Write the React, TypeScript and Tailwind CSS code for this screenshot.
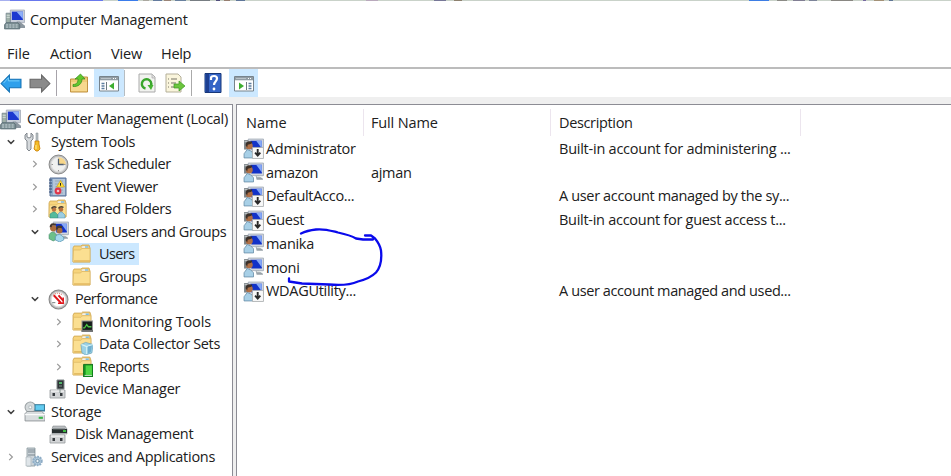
import React from "react";

type IconProps = { children: React.ReactNode; className?: string };

const Svg = ({ children, className = "h-5 w-5" }: IconProps) => (
  <svg viewBox="0 0 20 20" className={`block shrink-0 ${className}`} fill="none">
    {children}
  </svg>
);

const ComputerIcon = () => (
  <Svg className="h-[21px] w-[21px]">
    <path d="M6 1h13.5v12H6z" fill="#c9cfda" stroke="#a4acb9" strokeWidth=".8" />
    <path d="M7.5 2.5h10.5v8H7.5z" fill="#1c38d0" />
    <path d="M12 2.5h6v7z" fill="#8fb0f7" />
    <path d="M2 4h4v9H2z" fill="#9fb0a8" stroke="#6e7f8b" strokeWidth=".7" />
    <path d="M2.5 6h3m-3 2h3" stroke="#dfe8e6" strokeWidth=".7" />
    <path d="M12 12h3l5 4v2h-6z" fill="#8c97a0" />
    <path d="M2 13h11l2 2v4H.5v-4z" fill="#7b8f93" stroke="#566b72" strokeWidth=".7" />
    <path d="M2 15.2h2m1 0h2m1 0h2m1 0h2M2 17.2h2m1 0h2m1 0h2m1 0h2" stroke="#d5e0e5" strokeWidth=".9" />
  </Svg>
);

const ToolsIcon = () => (
  <Svg>
    <path d="M3 1v4l2 1 2-1V1l2 2v4L7 9v8l-2 2-2-2V9L1 7V3z" fill="#d5d9dc" stroke="#777e84" strokeWidth=".9" />
    <path d="M12 1h2v9h-2z" fill="#b9c1c5" stroke="#7c858b" strokeWidth=".5" />
    <path d="M11 9h4v3l1 5-2 2h-2l-2-2 1-5z" fill="#f5bd27" stroke="#c87d09" strokeWidth=".8" />
    <path d="M12 13v4" stroke="#fff09b" />
  </Svg>
);

const ClockIcon = () => (
  <Svg className="h-[21px] w-[21px]">
    <circle cx="10" cy="10" r="9" fill="#bcbebf" stroke="#858585" strokeWidth=".9" />
    <circle cx="10" cy="10" r="7" fill="#f0f1f0" stroke="#ddd" />
    <path d="M10 10V3a7 7 0 0 1 7 7z" fill="#f7d68a" />
    <path d="M10 4.5V10h5" stroke="#526071" strokeWidth="1.2" />
    <path d="M3.5 10h1m11 0h1M10 15.5v1" stroke="#767676" />
  </Svg>
);

const EventIcon = () => (
  <Svg>
    <path d="M2 1h16v18H2z" fill="#8ca8c9" stroke="#566f95" />
    <path d="M5 2h12v16H5z" fill="#b3c5d9" />
    <path d="M7 4h8M7 7h8M7 10h8M7 13h8M7 16h8" stroke="#899daf" strokeWidth=".7" />
    <path d="M1 3h3M1 6h3M1 9h3M1 12h3M1 15h3" stroke="#344e79" />
    <path d="M12.5 3.5l4 6.5h-8z" fill="#ffdd39" stroke="#ca9d0d" strokeWidth=".6" />
    <path d="M12.5 6v2.7" stroke="#222" />
    <circle cx="10" cy="14" r="3.4" fill="#df3549" />
    <circle cx="10" cy="14" r="1.3" fill="#f5c3c8" />
  </Svg>
);

const Folder = () => (
  <>
    <path d="M1 4l1-2h7l1-1h7l1 3v14H1z" fill="#f7d47c" stroke="#cea64f" strokeWidth=".8" />
    <path d="M9 4l1-2h6l1 2z" fill="#fff" stroke="#c9a75f" strokeWidth=".5" />
    <path d="M13 3h3" stroke="#45a7dc" />
    <path d="M1.5 6h7l1.5-1.5h8V18H1z" fill="#fbdf91" stroke="#d9b25c" strokeWidth=".6" />
    <path d="M2 17h16" stroke="#e1b75d" strokeWidth="1.4" />
  </>
);

const FolderIcon = () => <Svg><Folder /></Svg>;

const SharedIcon = () => (
  <Svg>
    <Folder />
    <circle cx="6" cy="10.5" r="2.2" fill="#bb7542" />
    <path d="M3.5 9.5q2-3 5-1" stroke="#493d34" strokeWidth="1.5" />
    <path d="M2 19v-4l3-2h2l3 3v3z" fill="#54bb9c" stroke="#338979" strokeWidth=".5" />
    <circle cx="13" cy="10.5" r="2.2" fill="#b56d3c" />
    <path d="M10.5 9.5q2-3 5-1" stroke="#493d34" strokeWidth="1.5" />
    <path d="M10 19v-4l2-2h2l3 3v3z" fill="#9ccde1" stroke="#478caf" strokeWidth=".5" />
  </Svg>
);

const Monitor = () => (
  <>
    <path d="M5 1h14.5v12H6z" fill="#d2d7df" stroke="#a2abb7" strokeWidth=".8" />
    <path d="M7 2.5h11V11H8z" fill="#1232c8" />
    <path d="M12.5 2.5H18v7.5z" fill="#86a8f5" />
    <path d="M12 13h3l4 3v1h-6z" fill="#98a2a9" />
    <path d="M13 14h6" stroke="#e9eeee" />
  </>
);

const UsersIcon = () => (
  <Svg className="h-[21px] w-[21px]">
    <Monitor />
    <circle cx="5" cy="7" r="3" fill="#ac6c3c" />
    <path d="M2.5 6q0-4 5-2.5" stroke="#44362d" strokeWidth="2" />
    <circle cx="11" cy="9" r="2.8" fill="#a56a3e" />
    <path d="M8.5 8q0-4 5-2" stroke="#43392e" strokeWidth="2" />
    <path d="M1 17v-4q3-5 7 0l1 4-4 2z" fill="#6cc08a" stroke="#36835e" strokeWidth=".5" />
    <path d="M7 18v-3q4-5 8 1v2l-4 2z" fill="#a5d8ee" stroke="#4d8ca9" strokeWidth=".6" />
  </Svg>
);

const UserIcon = ({ disabled }: { disabled?: boolean }) => (
  <Svg className="h-[21px] w-[21px]">
    <Monitor />
    <path d="M1 2h4v9H1z" fill="#7c8488" />
    <path d="M1.5 3.5h3" stroke="#d5dadb" strokeWidth=".8" />
    <circle cx="6" cy="7.5" r="3.3" fill="#b06f45" />
    <path d="M2.5 7q0-5 6.5-3.5l-1 2-3.5 1-.5 2.500z" fill="#3b3029" />
    <path d="M1 19v-4l3-4 3 1 3 3v4z" fill="#a8d0e7" stroke="#6085a1" strokeWidth=".7" />
    {disabled && (
      <>
        <path d="M9 9h10.500v10.500H9z" fill="#f8f8f8" stroke="#a9adaf" strokeWidth=".8" />
        <path d="M14 10.500v6M11.500 14l2.500 2.700 2.500-2.700" stroke="#292929" strokeWidth="1.800" />
      </>
    )}
  </Svg>
);

const GaugeIcon = () => (
  <Svg className="h-[21px] w-[21px]">
    <circle cx="10" cy="10" r="9" fill="#bbb" stroke="#878787" />
    <circle cx="10" cy="10" r="7" fill="#fff" stroke="#ddd" />
    <path d="M5 6q4-4 9 0" stroke="#d98379" strokeDasharray="1 1" />
    <path d="M5.500 6l7 7.500M10 6l4.500 5" stroke="#df171c" strokeWidth="1.900" />
    <path d="M14.500 8v5.500h-5" stroke="#df171c" strokeWidth="1.400" />
    <path d="M4 13h3" stroke="#7d8687" />
  </Svg>
);

const MonitoringIcon = () => (
  <Svg className="h-[21px] w-[21px]">
    <Folder />
    <path d="M9 9h11v11H9z" fill="#999" />
    <path d="M10 10h9v8h-9z" fill="#161d1c" />
    <path d="M10.5 16h1.5l2-3 1.5 2h3" stroke="#4cc646" strokeWidth="1.2" />
    <path d="M9 19h11" stroke="#4e5354" />
  </Svg>
);

const CollectorIcon = () => (
  <Svg className="h-[21px] w-[21px]">
    <Folder />
    <path d="M8.500 10l4.500-2 7 2-1 8-6 2-3.500-2z" fill="#9bd2e6" stroke="#619eb9" strokeWidth=".6" />
    <path d="M9 10l5 2 6-2M14 12v7" stroke="#d7f3f7" />
    <path d="M15 12l4-1-1 6-3 2z" fill="#6fafd0" />
  </Svg>
);

const ReportsIcon = () => (
  <Svg className="h-[21px] w-[21px]">
    <Folder />
    <path d="M11 8h9v12h-9z" fill="#169321" stroke="#096817" strokeWidth=".8" />
    <path d="M13 9h6v9h-6z" fill="#50d642" />
    <path d="M12 18.500h7" stroke="#fff" strokeWidth=".7" />
  </Svg>
);

const DeviceBase = () => (
  <>
    <path d="M2 11h15v8H2z" fill="#d2d4d6" stroke="#969a9d" strokeWidth=".8" />
    <path d="M4.500 14h2.500v3H4.500zm7.500 0h2.500v3H12z" fill="#383c40" />
    <path d="M3 12h13" stroke="#fff" />
  </>
);

const DeviceIcon = () => (
  <Svg>
    <DeviceBase />
    <path d="M9 1h7v9H9z" fill="#303638" stroke="#81888b" />
    <path d="M11 3h3v2h-3z" fill="#53b36b" />
    <path d="M11 7h3M12 10v4" stroke="#81928c" />
  </Svg>
);

const DiskIcon = () => (
  <Svg>
    <DeviceBase />
    <path d="M5 2h12l2 3v5H4V5z" fill="#babec1" stroke="#747b7d" strokeWidth=".5" />
    <path d="M4 5h15v4H4z" fill="#272e2f" />
    <path d="M15 7h3" stroke="#48ed4b" strokeWidth="1.5" />
    <path d="M5 5h12" stroke="#6c7475" />
  </Svg>
);

const StorageIcon = () => (
  <Svg className="h-[21px] w-[21px]">
    <circle cx="6" cy="6" r="5" fill="#d4d9db" stroke="#9ba2a5" />
    <circle cx="6" cy="6" r="1.5" fill="#fff" stroke="#b5bec1" />
    <path d="M10 3h10v7H10z" fill="#367e9d" />
    <path d="M11 4h8v4.500h-8z" fill="#62cbf0" />
    <path d="M1 12l2-2h14l3 3v6H1z" fill="#d9dddf" stroke="#888e91" strokeWidth=".8" />
    <path d="M1 13h19" stroke="#fff" />
    <path d="M14 16h4" stroke="#3ab84b" strokeWidth="2" />
  </Svg>
);

const ServicesIcon = () => (
  <Svg>
    <path d="M3 1h8v18H3z" fill="#cdd5da" stroke="#87949b" strokeWidth=".8" />
    <path d="M4 3h7M4 5h7M4 8h7" stroke="#64747d" strokeWidth=".8" />
    <path d="M2 10h5v9H2z" fill="#dfe5e9" stroke="#a1abb2" strokeWidth=".6" />
    <circle cx="13.500" cy="14" r="4.2" fill="#b1cadd" stroke="#8fadc6" strokeWidth="2" strokeDasharray="1.9 .8" />
    <circle cx="13.500" cy="14" r="1.7" fill="#eef4f7" stroke="#6f91a9" />
  </Svg>
);

const ArrowIcon = ({ right }: { right?: boolean }) => (
  <Svg className="h-[21px] w-[22px]">
    {right ? (
      <path d="M19.500 10l-8-8v4H.500v8h11v4z" fill="#8a8a8a" stroke="#666" />
    ) : (
      <>
        <path d="M.500 10l8-8v4h11v8h-11v4z" fill="#2ea0ec" stroke="#1272b5" />
        <path d="M3 9.500l4.500-5v3H18" stroke="#78d0fb" strokeWidth=".9" />
      </>
    )}
  </Svg>
);

const UpFolderIcon = () => (
  <Svg>
    <path d="M1.500 6h6l2-2h9v15h-17z" fill="#f0cb76" stroke="#c19243" />
    <path d="M2 9h16v9H2z" fill="#f7d88e" />
    <path d="M4 11.500c4 0 5-2.500 5-5.500H6l5.500-5L16 6h-3c0 5-4 8-9 7.500z" fill="#62c72d" stroke="#318b1c" strokeWidth=".7" />
  </Svg>
);

const PaneIcon = ({ right }: { right?: boolean }) => (
  <Svg>
    <path d="M.5 3.5h19V18H.5z" fill="#fff" stroke="#77838c" />
    <path d="M1 4h18v4H1z" fill="#929da5" />
    <path d="M1 7.500h18" stroke="#dfe4e7" />
    <path d="M2 5.500h10" stroke="#b9c2c8" />
    <path d="M14 5.500h1m1 0h1" stroke="#fff" />
    {right ? (
      <>
        <path d="M12.500 9v8" stroke="#6e7980" />
        <path d="M14.500 10.500h3m-3 2.500h3m-3 2.500h3" stroke="#5d7e9f" strokeWidth="1.3" />
        <path d="M5 9.500v7l5-3.500z" fill="#3eae30" />
      </>
    ) : (
      <>
        <path d="M7.500 9v8" stroke="#6e7980" />
        <path d="M2.500 10.500h3m-3 2.500h3m-3 2.500h3" stroke="#5d7e9f" strokeWidth="1.3" />
        <path d="M15 9.500v7L10 13z" fill="#3eae30" />
      </>
    )}
  </Svg>
);

const RefreshIcon = () => (
  <Svg>
    <path d="M2 1h13l3 3v15H2z" fill="#f1f2ef" stroke="#aaa" />
    <path d="M15 1v4h3" fill="#ddd" stroke="#aaa" strokeWidth=".7" />
    <path d="M8.500 15.500A4.700 4.700 0 1 1 14 12.500" stroke="#39a52c" strokeWidth="2.4" />
    <path d="M10.500 12h6l-2.500 5z" fill="#45b332" />
  </Svg>
);

const ExportIcon = () => (
  <Svg>
    <path d="M1 1h12l3 3v15H1z" fill="#faf5dc" stroke="#b4af99" />
    <path d="M3 6h1m2 0h6M3 10h1m2 0h5M3 14h1m2 0h5" stroke="#777466" strokeWidth="1.2" />
    <path d="M9 11h5V8l6 5-6 5v-3H9z" fill="#6cc53d" stroke="#399a24" strokeWidth=".7" />
  </Svg>
);

const HelpIcon = () => (
  <Svg>
    <path d="M2 .5h16v19H2z" fill="#3564c6" stroke="#173779" />
    <path d="M3 1h3v18H3z" fill="#1d3f91" />
    <path d="M8 7V5q0-2 3-2t3 2.5c0 3-3 3-3 6.5" stroke="#fff" strokeWidth="2.2" />
    <circle cx="11" cy="16" r="1.4" fill="#fff" />
  </Svg>
);

const Chevron = ({ open }: { open?: boolean }) => (
  <svg viewBox="0 0 10 10" className="h-2.5 w-2.5" fill="none">
    <path
      d={open ? "M1.8 3.2 5 6.4l3.2-3.2" : "M3.2 1.8 6.4 5 3.2 8.2"}
      stroke={open ? "#404040" : "#999"}
      strokeWidth={open ? 1.5 : 1.2}
    />
  </svg>
);

type Node = {
  label: string;
  icon: React.ReactNode;
  indent: string;
  state?: "open" | "closed";
  selected?: boolean;
  tracking: string;
};

const tree: Node[] = [
  { label: "System Tools", icon: <ToolsIcon />, indent: "pl-[6px]", state: "open", tracking: "tracking-[-0.38px]" },
  { label: "Task Scheduler", icon: <ClockIcon />, indent: "pl-[30px]", state: "closed", tracking: "tracking-[-0.43px]" },
  { label: "Event Viewer", icon: <EventIcon />, indent: "pl-[30px]", state: "closed", tracking: "tracking-[-0.35px]" },
  { label: "Shared Folders", icon: <SharedIcon />, indent: "pl-[30px]", state: "closed", tracking: "tracking-[-0.35px]" },
  { label: "Local Users and Groups", icon: <UsersIcon />, indent: "pl-[30px]", state: "open", tracking: "tracking-[-0.42px]" },
  { label: "Users", icon: <FolderIcon />, indent: "pl-[54px]", selected: true, tracking: "tracking-[-0.6px]" },
  { label: "Groups", icon: <FolderIcon />, indent: "pl-[54px]", tracking: "tracking-[-0.4px]" },
  { label: "Performance", icon: <GaugeIcon />, indent: "pl-[30px]", state: "open", tracking: "tracking-[-0.5px]" },
  { label: "Monitoring Tools", icon: <MonitoringIcon />, indent: "pl-[54px]", state: "closed", tracking: "tracking-[-0.15px]" },
  { label: "Data Collector Sets", icon: <CollectorIcon />, indent: "pl-[54px]", state: "closed", tracking: "tracking-[-0.35px]" },
  { label: "Reports", icon: <ReportsIcon />, indent: "pl-[54px]", state: "closed", tracking: "tracking-[-0.4px]" },
  { label: "Device Manager", icon: <DeviceIcon />, indent: "pl-[30px]", tracking: "tracking-[-0.22px]" },
  { label: "Storage", icon: <StorageIcon />, indent: "pl-[6px]", state: "open", tracking: "tracking-[-0.2px]" },
  { label: "Disk Management", icon: <DiskIcon />, indent: "pl-[30px]", tracking: "tracking-[-0.25px]" },
  { label: "Services and Applications", icon: <ServicesIcon />, indent: "pl-[6px]", state: "closed", tracking: "tracking-[-0.27px]" },
];

const TreeRow = ({ node }: { node: Node }) => (
  <div className={`flex h-[22.5px] items-center ${node.indent}`}>
    <span className="flex w-[18px] shrink-0">{node.state && <Chevron open={node.state === "open"} />}</span>
    <span className={`flex h-[22px] items-center ${node.selected ? "-ml-0.5 bg-[#cce8ff] pr-[5px] pl-0.5" : ""}`}>
      <span className="flex w-[27px] shrink-0">{node.icon}</span>
      <span className={node.tracking}>{node.label}</span>
    </span>
  </div>
);

type User = { name: string; full?: string; description?: string; disabled?: boolean; tracking?: string };

const users: User[] = [
  { name: "Administrator", description: "Built-in account for administering ...", disabled: true, tracking: "tracking-[-0.24px]" },
  { name: "amazon", full: "ajman" },
  { name: "DefaultAcco...", description: "A user account managed by the sy...", disabled: true, tracking: "tracking-[-0.35px]" },
  { name: "Guest", description: "Built-in account for guest access t...", disabled: true, tracking: "tracking-[-0.28px]" },
  { name: "manika" },
  { name: "moni" },
  { name: "WDAGUtility...", description: "A user account managed and used...", disabled: true, tracking: "tracking-[-0.39px]" },
];

const columns = [
  { title: "Name", style: "w-[127px] pl-[9px]" },
  { title: "Full Name", style: "w-[187px] pl-[7px] tracking-[-0.15px]" },
  { title: "Description", style: "w-[250px] pl-2 tracking-[-0.35px]" },
];

const backdropDots = [
  "ml-[5px] w-[6px] bg-[#aaa79f]", "ml-1 w-[9px] bg-[#647b9e]", "ml-0.5 w-[7px] bg-[#9a8477]",
  "ml-1 w-[11px] bg-[#68809e]", "ml-1 w-[20px] bg-[#777d82]", "ml-[6px] w-1 bg-[#514e7b]",
  "ml-1 w-[6px] bg-[#967e70]", "ml-[6px] w-[9px] bg-[#5f7699]", "ml-[121px] w-[12px] bg-[#b9a9bc]",
  "ml-[56px] w-3 bg-[#777797]", "ml-2 w-2 bg-[#8d806e]",
  "ml-[287px] w-[20px] bg-[#3d7de4]", "ml-2 w-[10px] bg-[#8b8b86]", "ml-[6px] w-[12px] bg-[#817e93]",
  "ml-[4px] w-[8px] bg-[#7d8499]", "ml-[14px] w-[22px] bg-[#898782]", "ml-[10px] w-[3px] bg-[#7668a0]",
  "ml-2 w-[10px] bg-[#a39177]", "ml-[5px] w-[4px] bg-[#5f7594]",
];

export default function App() {
  return (
    <div className="flex h-[476px] w-[951px] flex-col overflow-hidden bg-white font-['Open_Sans','Noto_Sans',sans-serif] text-[14.5px] leading-5 whitespace-nowrap text-[#202020]">
      <div className="flex h-px shrink-0 bg-[#c9d2c9]">
        <span className="w-[10px] shrink-0 bg-[#a7b0ef]" />
        <span className="w-[93px] shrink-0 bg-[#6878ed]" />
        <span className="ml-[15px] w-5 shrink-0 bg-[#3a7ceb]" />
        {backdropDots.map((style) => <span key={style} className={`shrink-0 ${style}`} />)}
      </div>
      <header className="flex h-[37px] items-center pl-1">
        <ComputerIcon />
        <span className="ml-[5px] text-[14.3px] tracking-[-0.09px]">Computer Management</span>
      </header>
      <nav className="flex h-[29px] items-center pt-[3px]">
        <span className="w-[42px] pl-[7px]">File</span>
        <span className="w-[61px] pl-2 tracking-[-0.15px]">Action</span>
        <span className="w-[50px] pl-2 tracking-[-0.15px]">View</span>
        <span className="pl-2 tracking-[-0.3px]">Help</span>
      </nav>
      <div className="flex h-[30px] shrink-0 items-center border-t-2 border-[#bcbcbc]">
        <span><ArrowIcon /></span>
        <span className="ml-[7px]"><ArrowIcon right /></span>
        <span className="ml-[5px] h-[26px] w-px bg-[#a7a3aa]" />
        <span className="ml-[12px]"><UpFolderIcon /></span>
        <span className="ml-[5px] flex h-7 w-[30px] items-center justify-center bg-[#cce8ff]"><PaneIcon /></span>
        <span className="h-[26px] w-px bg-[#b6bdc2]" />
        <span className="ml-[12px]"><RefreshIcon /></span>
        <span className="ml-2"><ExportIcon /></span>
        <span className="ml-[6px] h-[26px] w-px bg-[#aaa]" />
        <span className="ml-[11px]"><HelpIcon /></span>
        <span className="ml-[6px] flex h-7 w-[29px] items-center justify-center bg-[#cce8ff]"><PaneIcon right /></span>
      </div>
      <div className="h-[7px] shrink-0 bg-[#efefef]" />
      <div className="flex min-h-0 flex-1 bg-[#efefef]">
        <aside className="w-[233px] shrink-0 border-t border-r border-[#8c8c94] bg-white pt-[3px]">
          <div className="flex h-[22.5px] items-center">
            <ComputerIcon />
            <span className="ml-[6px] tracking-[-0.3px]">Computer Management (Local)</span>
          </div>
          {tree.map((node) => <TreeRow key={node.label} node={node} />)}
        </aside>
        <main className="relative ml-[3px] flex-1 border-t border-l border-[#8c8c94] bg-white">
          <div className="flex h-[31px] pt-1">
            {columns.map(({ title, style }) => (
              <span key={title} className={`flex items-center border-r border-[#ece5ee] ${style}`}>
                {title}
              </span>
            ))}
          </div>
          <div className="pt-px">
            {users.map((user) => (
              <div key={user.name} className="flex h-[23.75px] items-center pl-[6px] tracking-[-0.3px]">
                <UserIcon disabled={user.disabled} />
                <span className="w-[105px] pl-[2px]">{user.name}</span>
                <span className="w-[187px] pl-[2px]">{user.full}</span>
                <span className={`pl-[3px] ${user.tracking ?? ""}`}>{user.description}</span>
              </div>
            ))}
          </div>
          <svg className="absolute top-[120px] left-[45px] h-[70px] w-[110px]" viewBox="282 225 110 70" fill="none">
            <path
              d="M301 233.500q6-3 15-4c8-1 14 1 22 3 9 2 13 3 18 6l7 1h10M365 235.500h6l4 3q5 6 6 12c1 9 0 16-5 22-5 5-10 7-18 9-9 4-18 4-29 3l-27-1-13-2v-3"
              stroke="#0a0aec"
              strokeWidth="2.3"
              strokeLinecap="round"
              strokeLinejoin="round"
            />
          </svg>
        </main>
      </div>
    </div>
  );
}
